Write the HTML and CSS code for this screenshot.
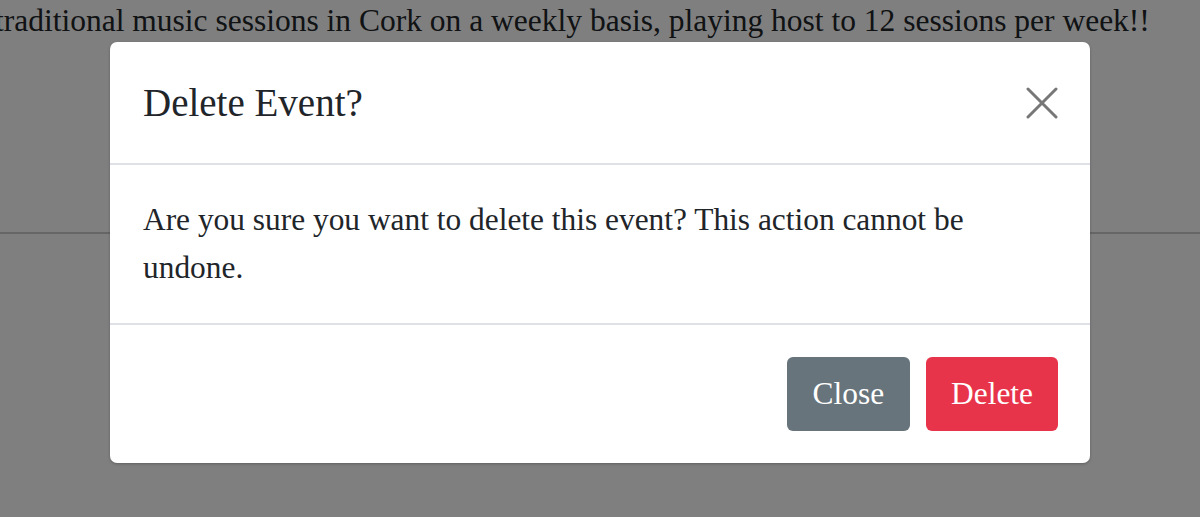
FILE: index.html
```html
<!DOCTYPE html>
<html lang="en">
<head>
<meta charset="utf-8">
<title>Delete Event</title>
<link rel="stylesheet" href="styles.css">
</head>
<body>
<main class="page">
  <p class="intro">traditional music sessions in Cork on a weekly basis, playing host to 12 sessions per week!!</p>
  <hr class="rule">
</main>
<div class="backdrop"></div>
<div class="modal" role="dialog" aria-labelledby="modal-title">
  <div class="modal-header">
    <h5 class="modal-title" id="modal-title">Delete Event?</h5>
    <button class="btn-close" aria-label="Close">
      <svg viewBox="0 0 32 32" width="32" height="32"><path d="M2 2L30 30M30 2L2 30" stroke="currentColor" stroke-width="3" stroke-linecap="round" fill="none"/></svg>
    </button>
  </div>
  <div class="modal-body">
    <p>Are you sure you want to delete this event? This action cannot be undone.</p>
  </div>
  <div class="modal-footer">
    <button class="btn btn-secondary">Close</button>
    <button class="btn btn-danger">Delete</button>
  </div>
</div>
</body>
</html>
```

FILE: styles.css
```css
html, body {
  margin: 0;
  padding: 0;
  height: 100%;
}
body {
  background: #ffffff;
  font-family: "Liberation Serif", "Times New Roman", serif;
  color: #212529;
  overflow: hidden;
  position: relative;
}
.intro {
  margin: 0 0 0 -5px;
  font-size: 31.5px;
  line-height: 42px;
  white-space: nowrap;
  color: #212529;
}
.rule {
  margin: 190px 0 0 0;
  border: 0;
  border-top: 2px solid #cccccc;
}
.backdrop {
  position: absolute;
  inset: 0;
  background: rgba(0, 0, 0, 0.5);
}
.modal {
  position: absolute;
  left: 110px;
  top: 42px;
  width: 980px;
  background: #ffffff;
  border-radius: 7px;
  box-shadow: 0 1px 3px rgba(0,0,0,0.25);
}
.modal-header {
  display: flex;
  align-items: center;
  justify-content: space-between;
  padding: 31px 32px 30px 33px;
  border-bottom: 2px solid #dee2e6;
}
.modal-title {
  margin: 0;
  font-size: 39px;
  font-weight: 400;
  line-height: 60px;
  color: #212529;
}
.btn-close {
  border: 0;
  background: transparent;
  padding: 0;
  width: 32px;
  height: 32px;
  color: #777777;
  display: flex;
}
.modal-body {
  padding: 31px 33px;
  border-bottom: 2px solid #dee2e6;
}
.modal-body p {
  margin: 0;
  font-size: 31.4px;
  line-height: 48px;
  color: #212529;
}
.modal-footer {
  display: flex;
  justify-content: flex-end;
  gap: 16px;
  padding: 32px 32px 32px;
}
.btn {
  font-family: "Liberation Serif", "Times New Roman", serif;
  font-size: 31.4px;
  line-height: 48px;
  padding: 13px 25px;
  border: 0;
  border-radius: 6px;
  color: #ffffff;
}
.btn-secondary {
  background: #67747b;
  padding-left: 26px;
  padding-right: 26px;
}
.btn-danger {
  background: #e8344a;
}
```
